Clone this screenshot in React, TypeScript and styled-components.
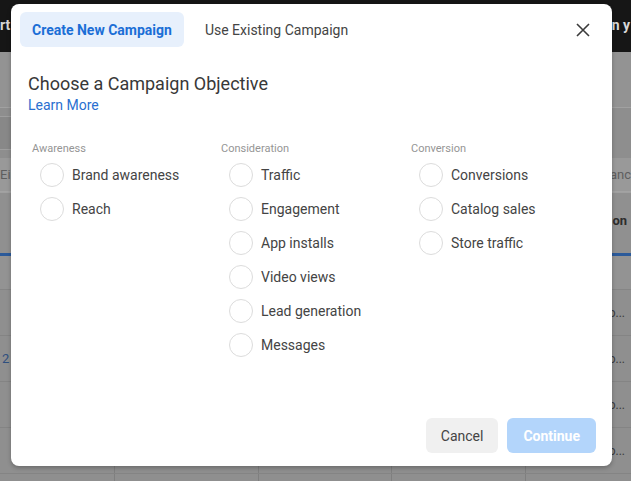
import styled, { createGlobalStyle } from 'styled-components'

const GlobalStyle = createGlobalStyle`
  html, body {
    margin: 0;
    padding: 0;
    width: 631px;
    height: 481px;
    overflow: hidden;
    background: #8f8f8f;
    font-family: Roboto, 'Liberation Sans', Arial, sans-serif;
  }
  * {
    box-sizing: border-box;
  }
`

const GROUPS = [
  { title: 'Awareness', items: ['Brand awareness', 'Reach'] },
  {
    title: 'Consideration',
    items: [
      'Traffic',
      'Engagement',
      'App installs',
      'Video views',
      'Lead generation',
      'Messages',
    ],
  },
  { title: 'Conversion', items: ['Conversions', 'Catalog sales', 'Store traffic'] },
]

// widths of the table columns behind the dialog
const COLUMN_WIDTHS = [115, 144, 133, 134]

const CloseIcon = () => (
  <svg width="14" height="14" viewBox="0 0 14 14">
    <path d="M1 1 L13 13 M13 1 L1 13" stroke="#3b3b3b" strokeWidth="1.6" />
  </svg>
)

const App = () => {
  return (
    <>
      <GlobalStyle />
      <Page>
        <TopBar>
          <TopText>rt</TopText>
          <TopText>n y</TopText>
        </TopBar>
        <SubBar />
        <Toolbar>
          <ToolButton />
        </Toolbar>
        <FilterRow>
          <FilterText>Ei</FilterText>
          <FilterText>anc</FilterText>
        </FilterRow>
        <HeaderRow>
          <HeaderText>on</HeaderText>
        </HeaderRow>
        <BlueLine />
        <SummaryRow />
        {[0, 1, 2, 3, 4].map((row) => (
          <TableRow key={row}>
            {COLUMN_WIDTHS.map((w, i) => (
              <Cell key={i} style={{ width: w }}>
                {row === 1 && i === 0 && <RowNumber>2</RowNumber>}
              </Cell>
            ))}
            <LastCell>{row < 4 ? 'o...' : ''}</LastCell>
          </TableRow>
        ))}
      </Page>

      <Modal>
        <Tabs>
          <Tab $active>Create New Campaign</Tab>
          <Tab>Use Existing Campaign</Tab>
          <CloseButton>
            <CloseIcon />
          </CloseButton>
        </Tabs>

        <Title>Choose a Campaign Objective</Title>
        <LearnMore>Learn More</LearnMore>

        <Groups>
          {GROUPS.map((group) => (
            <Group key={group.title}>
              <GroupTitle>{group.title}</GroupTitle>
              {group.items.map((item) => (
                <Option key={item}>
                  <Radio />
                  <OptionLabel>{item}</OptionLabel>
                </Option>
              ))}
            </Group>
          ))}
        </Groups>

        <Footer>
          <Button>Cancel</Button>
          <Button $primary>Continue</Button>
        </Footer>
      </Modal>
    </>
  )
}

export default App

const Page = styled.div`
  display: flex;
  flex-direction: column;
  width: 631px;
  height: 481px;
  overflow: hidden;
`

const TopBar = styled.div`
  height: 52px;
  flex-shrink: 0;
  background: #161616;
  display: flex;
  align-items: center;
  justify-content: space-between;
  padding: 0 1px 2px 0;
`

const TopText = styled.span`
  color: #d8d8d8;
  font-size: 14px;
  font-weight: 700;
  white-space: nowrap;
`

const SubBar = styled.div`
  height: 56px;
  flex-shrink: 0;
  background: #939393;
  border-bottom: 1px solid #a1a1a1;
`

const Toolbar = styled.div`
  height: 50px;
  flex-shrink: 0;
  background: #8e8e8e;
  display: flex;
  align-items: center;
`

const ToolButton = styled.div`
  width: 14px;
  height: 34px;
  border: 1px solid #9e9e9e;
  border-left: none;
  background: #888;
`

const FilterRow = styled.div`
  height: 34px;
  flex-shrink: 0;
  background: #999;
  border-bottom: 1px solid #a3a3a3;
  display: flex;
  align-items: center;
  justify-content: space-between;
`

const FilterText = styled.span`
  font-size: 13px;
  color: #5e5e5e;
`

const HeaderRow = styled.div`
  height: 61px;
  flex-shrink: 0;
  background: #909090;
  border-top: 1px solid #a0a0a0;
  display: flex;
  align-items: center;
  justify-content: flex-end;
  padding-bottom: 6px;
`

const HeaderText = styled.span`
  font-size: 13px;
  font-weight: 700;
  color: #2c2c2c;
  margin-right: 4px;
`

const BlueLine = styled.div`
  height: 3px;
  flex-shrink: 0;
  background: #2b5a9a;
`

const SummaryRow = styled.div`
  height: 34px;
  flex-shrink: 0;
  background: #939393;
  border-bottom: 1px solid #858585;
`

const TableRow = styled.div`
  height: 46px;
  flex-shrink: 0;
  display: flex;
  background: #8f8f8f;
  border-bottom: 1px solid #848484;
`

const Cell = styled.div`
  flex-shrink: 0;
  height: 100%;
  border-right: 1px solid #7f7f7f;
  display: flex;
  align-items: center;
`

const RowNumber = styled.span`
  font-size: 13px;
  color: #2f4f7f;
  margin-left: 2px;
`

const LastCell = styled.div`
  flex: 1;
  display: flex;
  align-items: center;
  justify-content: flex-end;
  padding-right: 6px;
  font-size: 12px;
  color: #3a3a3a;
`

const Modal = styled.div`
  position: absolute;
  left: 11px;
  top: 4px;
  width: 601px;
  height: 462px;
  background: #fff;
  border-radius: 8px;
  box-shadow: 0 2px 4px rgba(0, 0, 0, 0.25);
  display: flex;
  flex-direction: column;
  padding: 8px 16px 12px 9px;
`

const Tabs = styled.div`
  display: flex;
  align-items: center;
  gap: 9px;
  height: 35px;
  flex-shrink: 0;
`

const Tab = styled.div<{ $active?: boolean }>`
  height: 35px;
  padding: 0 12px;
  display: flex;
  align-items: center;
  border-radius: 6px;
  font-size: 14px;
  white-space: nowrap;
  font-weight: ${({ $active }) => ($active ? 700 : 400)};
  color: ${({ $active }) => ($active ? '#1b6ed6' : '#444')};
  background: ${({ $active }) => ($active ? '#e7f0fc' : 'transparent')};
`

const CloseButton = styled.div`
  margin-left: auto;
  margin-right: 1px;
  width: 24px;
  height: 24px;
  display: flex;
  align-items: center;
  justify-content: center;
`

const Title = styled.div`
  margin: 26px 0 0 8px;
  font-size: 18px;
  line-height: 22px;
  color: #383838;
`

const LearnMore = styled.a`
  margin: 1px 0 0 8px;
  font-size: 14px;
  line-height: 18px;
  color: #2a6fd0;
  align-self: flex-start;
`

const Groups = styled.div`
  display: grid;
  grid-template-columns: 189px 190px 190px;
  margin: 28px 0 0 12px;
  align-items: start;
`

const Group = styled.div`
  display: flex;
  flex-direction: column;
`

const GroupTitle = styled.div`
  font-size: 11px;
  line-height: 14px;
  color: #959595;
  margin-bottom: 2px;
`

const Option = styled.div`
  height: 34px;
  display: flex;
  align-items: center;
  gap: 8px;
  padding-left: 8px;
`

const Radio = styled.span`
  width: 24px;
  height: 24px;
  border-radius: 50%;
  border: 1px solid #dcdcdc;
  flex-shrink: 0;
`

const OptionLabel = styled.span`
  font-size: 14px;
  color: #444;
  white-space: nowrap;
`

const Footer = styled.div`
  margin-top: auto;
  margin-bottom: 1px;
  display: flex;
  justify-content: flex-end;
  gap: 9px;
`

const Button = styled.div<{ $primary?: boolean }>`
  height: 35px;
  display: flex;
  align-items: center;
  justify-content: center;
  border-radius: 6px;
  font-size: 14px;
  padding: 0 ${({ $primary }) => ($primary ? 16 : 15)}px;
  font-weight: ${({ $primary }) => ($primary ? 700 : 400)};
  color: ${({ $primary }) => ($primary ? '#fff' : '#444')};
  background: ${({ $primary }) => ($primary ? '#b3d5fb' : '#f0f0f0')};
`
